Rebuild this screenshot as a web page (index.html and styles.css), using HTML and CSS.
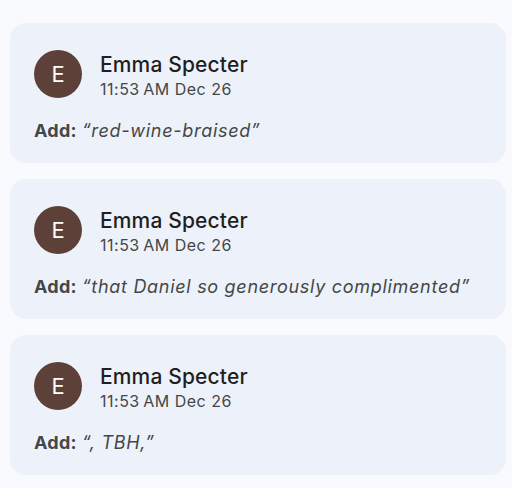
FILE: index.html
```html
<html>
<head><title>Suggestions</title>
<meta content="text/html;charset=utf-8" http-equiv="Content-Type" />
<link rel="stylesheet" href="styles.css">
</head>
<body>
<div class="list">
	<div class="card">
		<div class="head">
			<div class="avatar">E</div>
			<div class="who">
				<div class="name">Emma Specter</div>
				<div class="time">11:53&#8239;AM Dec 26</div>
			</div>
		</div>
		<div class="edit"><b>Add:</b> <i>“red-wine-braised”</i></div>
	</div>
	<div class="card">
		<div class="head">
			<div class="avatar">E</div>
			<div class="who">
				<div class="name">Emma Specter</div>
				<div class="time">11:53&#8239;AM Dec 26</div>
			</div>
		</div>
		<div class="edit"><b>Add:</b> <i>“that Daniel so generously complimented”</i></div>
	</div>
	<div class="card">
		<div class="head">
			<div class="avatar">E</div>
			<div class="who">
				<div class="name">Emma Specter</div>
				<div class="time">11:53&#8239;AM Dec 26</div>
			</div>
		</div>
		<div class="edit"><b>Add:</b> <i>“, TBH,”</i></div>
	</div>
</div>
</body>
</html>
```
FILE: styles.css
```css
body{
	padding:0;
	margin:0;
	background-color:#f8fafd;
	font-family: Inter, Roboto, sans-serif;
}

.list{
	display:flex;
	flex-direction:column;
	gap:16px;
	padding:23px 6px 0 10px;
}

.card{
	background-color:#edf2fa;
	border-radius:16px;
	height:140px;
	box-sizing:border-box;
	padding:24px 24px 0 24px;
}

.head{
	display:flex;
	align-items:center;
	gap:18px;
}

.avatar{
	width:48px;
	height:48px;
	border-radius:50%;
	background-color:#5d4037;
	color:white;
	font-size:22px;
	display:flex;
	align-items:center;
	justify-content:center;
	flex-shrink:0;
}

.who{
	padding-top:5px;
}

.name{
	font-size:21px;
	line-height:26px;
	letter-spacing:0.15px;
	color:#1f1f1f;
	font-weight:500;
}

.time{
	font-size:16px;
	line-height:22px;
	letter-spacing:0.5px;
	color:#444746;
}

.edit{
	margin-top:17px;
	font-size:18px;
	line-height:28px;
	color:#444746;
}

.edit b{
	font-weight:700;
	letter-spacing:0.3px;
}

.edit i{
	letter-spacing:0.7px;
}
```
